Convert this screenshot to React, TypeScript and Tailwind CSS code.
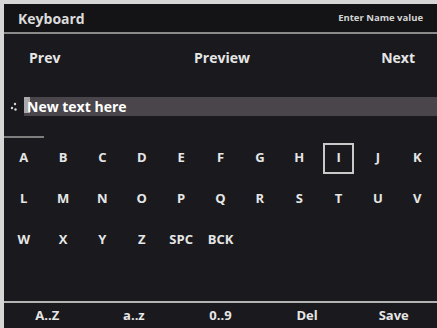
const row1 = ['A', 'B', 'C', 'D', 'E', 'F', 'G', 'H', 'I', 'J', 'K'];
const row2 = ['L', 'M', 'N', 'O', 'P', 'Q', 'R', 'S', 'T', 'U', 'V'];
const row3 = ['W', 'X', 'Y', 'Z', 'SPC', 'BCK'];
const modes = ['A..Z', 'a..z', '0..9', 'Del', 'Save'];

function Key({ label, selected }: { label: string; selected?: boolean }) {
    return (
        <div className="flex items-center justify-center h-[36px]">
            {selected ? (
                <div className="w-[31px] h-[31px] border-2 border-[#c9c9c9] flex items-center justify-center">
                    {label}
                </div>
            ) : (
                label
            )}
        </div>
    );
}

export default function App() {
    return (
        <div
            className="w-[437px] h-[328px] bg-[#d6d6d6] pl-1 pt-1 overflow-hidden"
            style={{ fontFamily: '"Open Sans", "DejaVu Sans", sans-serif' }}
        >
            <div className="h-full flex flex-col bg-[#1a1a1e] text-[#e6e6e6] font-bold">
                {/* title bar */}
                <div className="h-[28px] bg-[#141417] flex items-center justify-between px-[14px]">
                    <span className="text-[14px] text-[#dcdcdc]">Keyboard</span>
                    <span className="text-[9.5px] text-[#d4d4d4]">Enter Name value</span>
                </div>
                <div className="h-[2px] bg-[#8a8a8a]" />

                {/* nav */}
                <div className="h-[46px] grid grid-cols-3 items-center pl-[25px] pr-[22px] text-[14px]">
                    <span className="text-left">Prev</span>
                    <span className="text-center">Preview</span>
                    <span className="text-right">Next</span>
                </div>

                {/* input */}
                <div className="mt-[17px] flex items-center h-[19px]">
                    <div className="w-[20px] flex justify-center">
                        <svg width="8" height="10" viewBox="0 0 8 10">
                            <circle cx="5" cy="2" r="1.2" fill="#d8d8d8" />
                            <circle cx="2" cy="6" r="1.2" fill="#d8d8d8" />
                            <circle cx="5.5" cy="7.5" r="1.2" fill="#d8d8d8" />
                        </svg>
                    </div>
                    <div className="flex-1 h-full bg-[#49454a] flex items-center">
                        <div className="relative flex items-center text-[14px] text-white">
                            <span className="absolute left-0 top-[1px] w-[6px] h-[16px] bg-[#a9a9a9]" />
                            <span className="relative pl-[3px]">New text here</span>
                        </div>
                    </div>
                </div>
                <div className="mt-[20px] h-[2px] w-[40px] bg-[#7e7e7e]" />

                {/* keys */}
                <div className="mt-[2px] grid grid-cols-11 gap-y-[5px] text-[13px]">
                    {row1.map(k => (
                        <Key key={k} label={k} selected={k === 'I'} />
                    ))}
                    {row2.map(k => (
                        <Key key={k} label={k} />
                    ))}
                    {row3.map(k => (
                        <Key key={k} label={k} />
                    ))}
                </div>

                <div className="flex-1" />
                <div className="h-[2px] bg-[#b3b3b3]" />
                <div className="h-[25px] grid grid-cols-5 items-center text-[13px]">
                    {modes.map(m => (
                        <span key={m} className="text-center">{m}</span>
                    ))}
                </div>
            </div>
        </div>
    );
}
